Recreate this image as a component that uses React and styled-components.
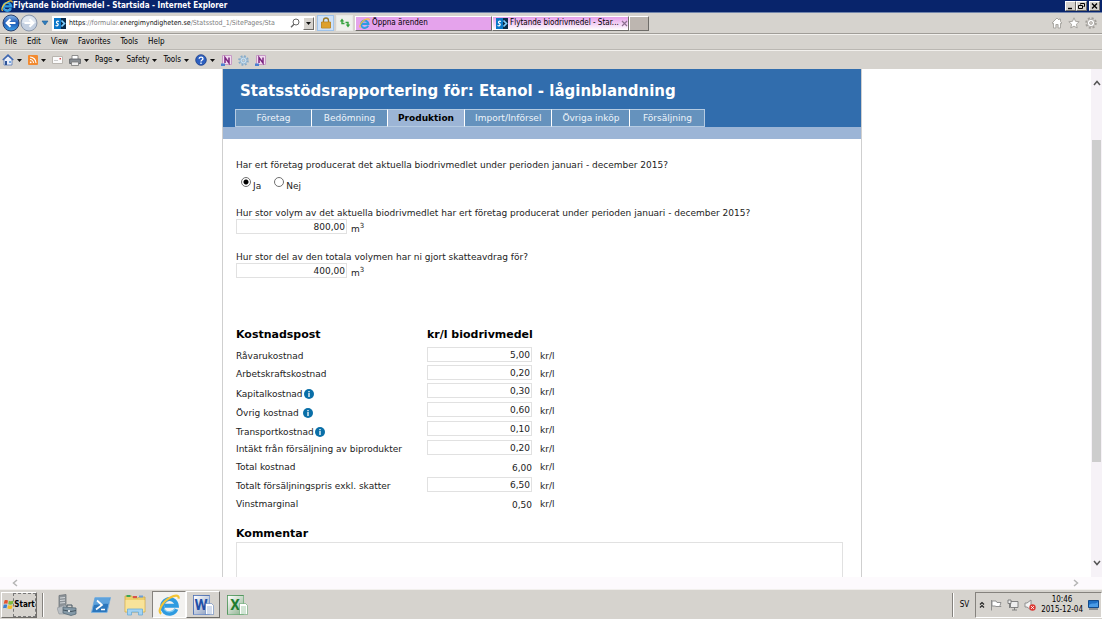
import { useState } from "react";
import styled, { createGlobalStyle, css } from "styled-components";

const App = () => {
  const [tab, setTab] = useState("Produktion");
  const [produced, setProduced] = useState("ja");

  return (
    <Desktop>
      <GlobalStyle />

      {/* Browser window */}
      <TitleBar>
        <IeIcon size={12} />
        <WindowTitle>Flytande biodrivmedel - Startsida - Internet Explorer</WindowTitle>
        <WindowButtons>
          <WindowButton aria-label="Minimize">
            <svg width="9" height="8" viewBox="0 0 9 8">
              <path d="M2 6.5h4" stroke="#000" strokeWidth="1.4" />
            </svg>
          </WindowButton>
          <WindowButton aria-label="Restore">
            <svg width="9" height="8" viewBox="0 0 9 8" fill="none" stroke="#000">
              <path d="M3.500 2.500v-1h4v3h-1" />
              <path d="M1.500 3.500h4v3h-4z" />
            </svg>
          </WindowButton>
          <WindowButton aria-label="Close" $apart>
            <svg width="9" height="8" viewBox="0 0 9 8" stroke="#000" strokeWidth="1.4">
              <path d="M2 1.500l5 5M7 1.500l-5 5" />
            </svg>
          </WindowButton>
        </WindowButtons>
      </TitleBar>

      <AddressRow>
        <IconButton aria-label="Back">
          <BackIcon />
        </IconButton>
        <IconButton aria-label="Forward">
          <ForwardIcon />
        </IconButton>
        <HistoryButton aria-label="Recent pages">
          <svg width="8" height="6" viewBox="0 0 8 6">
            <path d="M1 1h6L4 5z" fill="#2f7fc0" stroke="#1b5a94" strokeWidth=".6" />
          </svg>
        </HistoryButton>
        <AddressBar>
          <SharePointIcon />
          <AddressText role="textbox" aria-label="Address" contentEditable suppressContentEditableWarning>
            <b>https</b>://formular.<b>energimyndigheten.se</b>/Statsstod_1/SitePages/Sta
          </AddressText>
          <IconButton aria-label="Search">
            <svg width="10" height="10" viewBox="0 0 10 10" fill="none" stroke="#666">
              <circle cx="6" cy="4" r="3" />
              <path d="M4 6.300L1 9.300" strokeWidth="1.400" />
            </svg>
          </IconButton>
          <DropButton aria-label="Show address list">
            <Caret />
          </DropButton>
        </AddressBar>
        <SquareButton aria-label="Security report" $active>
          <svg width="10" height="12" viewBox="0 0 10 12">
            <path d="M2.500 5V3.500a2.500 2.500 0 0 1 5 0V5" fill="none" stroke="#9a7a2a" strokeWidth="1.300" />
            <path d="M.5 5h9v6h-9z" fill="#e8ab33" stroke="#b57d17" strokeWidth=".8" />
            <path d="M1 7h8M1 9h8" stroke="#c98d1f" strokeWidth=".7" />
          </svg>
        </SquareButton>
        <SquareButton aria-label="Refresh">
          <svg width="12" height="10" viewBox="0 0 12 10" fill="#31a03a" stroke="#31a03a">
            <path d="M3 .5L.8 3.500h4.400z" stroke="none" />
            <path d="M3 3v2.500h2.500" fill="none" strokeWidth="1.400" />
            <path d="M9 9.500L6.800 6.500h4.400z" stroke="none" />
            <path d="M9 7V4.500H6.500" fill="none" strokeWidth="1.400" />
          </svg>
        </SquareButton>
        <BrowserTabs>
          <BrowserTab>
            <IeIcon size={11} />
            <span>Öppna ärenden</span>
          </BrowserTab>
          <BrowserTab $current>
            <SharePointIcon />
            <span>Flytande biodrivmedel - Star...</span>
            <svg width="7" height="7" viewBox="0 0 7 7" stroke="#8d6f90" strokeWidth="1.200">
              <path d="M1 1l5 5M6 1L1 6" />
            </svg>
          </BrowserTab>
          <NewTabButton aria-label="New tab" />
        </BrowserTabs>
        <CornerButtons>
          <IconButton aria-label="Home">
            <svg width="12" height="12" viewBox="0 0 12 12" fill="#fff" stroke="#a3a09b" strokeWidth=".9">
              <path d="M6 1L1 6l.8.8.7-.6V11h2.400V7.500h2.200V11h2.400V6.200l.7.6L11 6 9.500 4.500V2H8v1z" />
            </svg>
          </IconButton>
          <IconButton aria-label="Favorites">
            <svg width="12" height="12" viewBox="0 0 12 12" fill="#fff" stroke="#a3a09b" strokeWidth=".9">
              <path d="M6 .8l1.500 3.500 3.700.4-2.800 2.500.8 3.800L6 9.100 2.800 11l.8-3.800L.8 4.700l3.700-.4z" />
            </svg>
          </IconButton>
          <IconButton aria-label="Settings">
            <GearIcon size={12} fill="#fff" stroke="#a3a09b" />
          </IconButton>
        </CornerButtons>
      </AddressRow>

      <MenuBar>
        {menus.map((menu) => (
          <MenuButton key={menu}>{menu}</MenuButton>
        ))}
      </MenuBar>

      <CommandBar>
        <CommandButton aria-label="Home page">
          <svg width="12" height="12" viewBox="0 0 12 12">
            <path d="M2 5.500V11h8V5.500L6 2z" fill="#e8eefa" stroke="#5879b5" strokeWidth=".8" />
            <path d="M.7 6L6 1l5.300 5" fill="none" stroke="#3d66b0" strokeWidth="1.300" />
            <path d="M3 7h2v4H3z" fill="#2f5597" />
            <path d="M7 7h2v2H7z" fill="#75a7e0" />
          </svg>
          <Caret />
        </CommandButton>
        <CommandButton aria-label="Feeds">
          <svg width="10" height="10" viewBox="0 0 10 10" fill="none" stroke="#fff" strokeWidth="1.100">
            <rect width="10" height="10" rx="1" fill="#f28a30" stroke="none" />
            <path d="M2 2a6 6 0 0 1 6 6M2 4.500A3.500 3.500 0 0 1 5.500 8" />
            <circle cx="2.700" cy="7.300" r=".9" fill="#fff" stroke="none" />
          </svg>
          <Caret />
        </CommandButton>
        <CommandButton aria-label="Read mail">
          <svg width="11" height="8" viewBox="0 0 11 8">
            <path d="M.5.500h10v7H.5z" fill="#fafafa" stroke="#b9b5af" />
            <path d="M7.500 2h1.500v1.500H7.500z" fill="#d44" />
            <path d="M2 4.500h4" stroke="#ccc" />
          </svg>
        </CommandButton>
        <CommandButton aria-label="Print">
          <svg width="12" height="11" viewBox="0 0 12 11">
            <path d="M3 .5h6v4H3z" fill="#fff" stroke="#777" strokeWidth=".8" />
            <path d="M.6 4h10.800v4.500H.6z" fill="#8a8f94" stroke="#55595d" strokeWidth=".8" />
            <path d="M2.500 7h7v3.500h-7z" fill="#eee" stroke="#777" strokeWidth=".8" />
          </svg>
          <Caret />
        </CommandButton>
        {commands.map((command) => (
          <CommandButton key={command}>
            {command}
            <Caret />
          </CommandButton>
        ))}
        <CommandButton aria-label="Help">
          <svg width="12" height="12" viewBox="0 0 12 12">
            <circle cx="6" cy="6" r="5.300" fill="#2c5fc0" stroke="#1d3f85" strokeWidth=".8" />
            <path d="M4.200 4.700C4.200 2.500 8 2.600 8 4.700 8 6 6 6 6 7.400M6 8.500V10" fill="none" stroke="#fff" strokeWidth="1.300" />
          </svg>
          <Caret />
        </CommandButton>
        <AddOns>
          <CommandButton aria-label="Send to OneNote">
            <OneNoteIcon />
          </CommandButton>
          <CommandButton aria-label="Add-on settings">
            <GearIcon size={11} fill="#c9dff0" stroke="#86abc9" />
          </CommandButton>
          <CommandButton aria-label="OneNote linked notes">
            <OneNoteIcon />
          </CommandButton>
        </AddOns>
      </CommandBar>

      {/* Page */}
      <Viewport>
        <PageArea>
          <Sheet>
            <SheetHeader>
              <SheetTitle>Statsstödsrapportering för: Etanol - låginblandning</SheetTitle>
              <FormTabs>
                {formTabs.map((name) => (
                  <FormTab key={name} $current={name === tab} onClick={() => setTab(name)}>
                    {name}
                  </FormTab>
                ))}
              </FormTabs>
            </SheetHeader>
            <Form>
              <RadioGroup>
                <legend>
                  Har ert företag producerat det aktuella biodrivmedlet under perioden januari - december 2015?
                </legend>
                {answers.map(({ value, label }) => (
                  <RadioLabel key={value}>
                    <Radio
                      name="produced"
                      value={value}
                      checked={produced === value}
                      onChange={() => setProduced(value)}
                    />
                    <span>{label}</span>
                  </RadioLabel>
                ))}
              </RadioGroup>

              {volumes.map(({ id, question, value }) => (
                <Question key={id}>
                  <label htmlFor={id}>{question}</label>
                  <VolumeRow>
                    <NumberInput id={id} defaultValue={value} />
                    <Unit>
                      m<sup>3</sup>
                    </Unit>
                  </VolumeRow>
                </Question>
              ))}

              <CostTable>
                <colgroup>
                  <LabelCol />
                  <ValueCol />
                  <col />
                </colgroup>
                <thead>
                  <tr>
                    <th scope="col">Kostnadspost</th>
                    <th scope="col" colSpan={2}>kr/l biodrivmedel</th>
                  </tr>
                </thead>
                <tbody>
                  {costs.map(({ id, label, value, info, spaced, computed }) => (
                    <CostRow key={id} $tall={info || computed}>
                      <th scope="row">
                        <CostLabel $info={info} $spaced={spaced}>
                          <label htmlFor={id}>{label}</label>
                          {info && <InfoIcon />}
                        </CostLabel>
                      </th>
                      <td>
                        {computed ? (
                          <Computed id={id}>{value}</Computed>
                        ) : (
                          <NumberInput id={id} defaultValue={value} />
                        )}
                      </td>
                      <td>kr/l</td>
                    </CostRow>
                  ))}
                </tbody>
              </CostTable>

              <CommentLabel htmlFor="comment">Kommentar</CommentLabel>
              <Comment id="comment" />
            </Form>
          </Sheet>
        </PageArea>
        <ScrollTrack>
          <Chevron direction="up" />
          <ScrollThumb />
          <Chevron direction="down" />
        </ScrollTrack>
      </Viewport>
      <BottomScroll>
        <Chevron direction="left" />
        <Chevron direction="right" />
      </BottomScroll>

      {/* Taskbar */}
      <Taskbar>
        <StartButton>
          <WindowsIcon />
          <span>Start</span>
        </StartButton>
        <Divider />
        <TaskButton aria-label="Server Manager">
          <ServerIcon />
        </TaskButton>
        <TaskButton aria-label="PowerShell">
          <PowerShellIcon />
        </TaskButton>
        <TaskButton aria-label="File Explorer">
          <FolderIcon />
        </TaskButton>
        <TaskButton aria-label="Internet Explorer" $state="pressed">
          <IeIcon size={22} />
        </TaskButton>
        <TaskButton aria-label="Word" $state="raised">
          <OfficeIcon letter="W" color="#1f4fa8" />
        </TaskButton>
        <TaskButton aria-label="Excel">
          <OfficeIcon letter="X" color="#1f7d30" />
        </TaskButton>
        <TrayArea>
          <Divider />
          <Language>SV</Language>
          <Tray>
            <TrayIcons />
            <Clock>
              <span>10:46</span>
              <span>2015-12-04</span>
            </Clock>
            <svg width="11" height="10" viewBox="0 0 11 10">
              <path d="M.5.500h10v7H.5z" fill="#1f6fc4" stroke="#134a8a" />
              <path d="M1 5c3-3 6 0 9-3v5H1z" fill="#4a9be6" />
              <path d="M1 9h9" stroke="#46505a" />
            </svg>
          </Tray>
        </TrayArea>
      </Taskbar>
    </Desktop>
  );
};

const menus = ["File", "Edit", "View", "Favorites", "Tools", "Help"];
const commands = ["Page", "Safety", "Tools"];
const formTabs = ["Företag", "Bedömning", "Produktion", "Import/Införsel", "Övriga inköp", "Försäljning"];
const answers = [
  { value: "ja", label: "Ja" },
  { value: "nej", label: "Nej" },
];

const volumes = [
  {
    id: "volume",
    question:
      "Hur stor volym av det aktuella biodrivmedlet har ert företag producerat under perioden januari - december 2015?",
    value: "800,00",
  },
  {
    id: "deducted",
    question: "Hur stor del av den totala volymen har ni gjort skatteavdrag för?",
    value: "400,00",
  },
];

const costs = [
  { id: "material", label: "Råvarukostnad", value: "5,00" },
  { id: "labour", label: "Arbetskraftskostnad", value: "0,20" },
  { id: "capital", label: "Kapitalkostnad", value: "0,30", info: true },
  { id: "other", label: "Övrig kostnad", value: "0,60", info: true, spaced: true },
  { id: "transport", label: "Transportkostnad", value: "0,10", info: true },
  { id: "byproducts", label: "Intäkt från försäljning av biprodukter", value: "0,20" },
  { id: "total", label: "Total kostnad", value: "6,00", computed: true },
  { id: "price", label: "Totalt försäljningspris exkl. skatter", value: "6,50" },
  { id: "margin", label: "Vinstmarginal", value: "0,50", computed: true },
];

// Icons
const Caret = () => (
  <svg width="5" height="3" viewBox="0 0 5 3">
    <path d="M0 0h5L2.500 3z" fill="#111" />
  </svg>
);

const IeIcon = ({ size }) => (
  <svg width={size} height={size} viewBox="0 0 24 24" fill="none">
    <path d="M20 16.500A8 8 0 1 1 20.500 12.800H7" stroke="#2f9be0" strokeWidth="4.400" />
    <path d="M18.500 15.800a7 7 0 0 1-12 .5" stroke="#7cc8f2" strokeWidth="1.200" />
    <path d="M3.500 21.500C-1 19 5 8 13 4c5-2.600 10-3.500 9.500 1" stroke="#f3c436" strokeWidth="2.400" />
  </svg>
);

const BackIcon = () => (
  <svg width="18" height="18" viewBox="0 0 18 18">
    <defs>
      <linearGradient id="back" x1="0" y1="0" x2="0" y2="1">
        <stop offset="0" stopColor="#8ab8ea" />
        <stop offset=".5" stopColor="#1b58b4" />
        <stop offset="1" stopColor="#3fa2ea" />
      </linearGradient>
    </defs>
    <circle cx="9" cy="9" r="8" fill="url(#back)" stroke="#27406e" />
    <path d="M13.500 9H5M8.500 5.200L4.700 9l3.800 3.800" fill="none" stroke="#fff" strokeWidth="2.200" />
  </svg>
);

const ForwardIcon = () => (
  <svg width="18" height="18" viewBox="0 0 18 18">
    <circle cx="9" cy="9" r="8" fill="#c3cfe0" stroke="#8a97ab" />
    <path d="M2 9a7 7 0 0 1 14 0z" fill="#dfe6f0" />
    <path d="M4.500 9H13M9.500 5.200L13.300 9l-3.800 3.800" fill="none" stroke="#fff" strokeWidth="2.200" />
  </svg>
);

const SharePointIcon = () => (
  <svg width="12" height="11" viewBox="0 0 12 11">
    <path d="M0 0h12v11H0z" fill="#0b2b4a" />
    <path d="M0 0h7v11H0z" fill="#0b76c8" />
    <path d="M5 3.500C3 2.500 1.500 4.500 3.300 5.300S4 8.500 1.500 7.500" fill="none" stroke="#fff" strokeWidth="1.200" />
    <path d="M7.500 2.500l3 3-3 3" fill="none" stroke="#7fd0ff" strokeWidth="1.700" />
  </svg>
);

const GearIcon = ({ size, fill, stroke }) => (
  <svg width={size} height={size} viewBox="0 0 12 12" fill="none">
    <circle cx="6" cy="6" r="4.700" stroke={stroke} strokeWidth="2.200" strokeDasharray="2 1.690" />
    <circle cx="6" cy="6" r="3.700" fill={fill} stroke={stroke} strokeWidth=".8" />
    <circle cx="6" cy="6" r="1.400" fill="#d6d3ce" stroke={stroke} strokeWidth=".8" />
  </svg>
);

const OneNoteIcon = () => (
  <svg width="11" height="11" viewBox="0 0 11 11">
    <path d="M1.500.500h9v9h-9z" fill="#f2dcf0" stroke="#c79ac5" />
    <path d="M4 8V2.500L8 8V2.500" fill="none" stroke="#7b2580" strokeWidth="1.500" />
    <path d="M0 8.500h4V11H0z" fill="#4a7fd0" />
  </svg>
);

const InfoIcon = () => (
  <svg width="10" height="10" viewBox="0 0 10 10">
    <circle cx="5" cy="5" r="5" fill="#0a6fa8" />
    <path d="M5 4v4M5 2v1.200" stroke="#fff" strokeWidth="1.300" />
  </svg>
);

const turns = { up: 0, right: 90, down: 180, left: 270 };

const Chevron = ({ direction }) => (
  <svg width="8" height="8" viewBox="0 0 8 8" fill="none">
    <path
      d="M1 6l3-3.500L7 6"
      stroke={direction === "left" || direction === "right" ? "#b5b5b5" : "#555"}
      strokeWidth="1.500"
      transform={`rotate(${turns[direction]} 4 4)`}
    />
  </svg>
);

const WindowsIcon = () => (
  <svg width="11" height="11" viewBox="0 0 11 11">
    <path d="M1.500 1.500C3 .7 4 1 5 1.500L4.300 5c-1-.5-2-.6-3.500 0z" fill="#e5532d" />
    <path d="M5.800 1.800c1.500.7 2.800.6 4.700-.2L9.800 5c-1.600.8-3 .9-4.600.3z" fill="#7dba3b" />
    <path d="M.7 5.800c1.400-.6 2.500-.5 3.500 0L3.500 9.300c-1-.5-2-.6-3.500 0z" fill="#3d7fd0" />
    <path d="M5 6.200c1.500.6 2.900.5 4.600-.2L9 9.400c-1.700.7-3.100.8-4.700.2z" fill="#f4bd28" />
  </svg>
);

const ServerIcon = () => (
  <svg width="20" height="22" viewBox="0 0 20 22">
    <path d="M2 1.500L9 .5v15l-7 1z" fill="#8d9398" stroke="#70767b" strokeWidth=".8" />
    <path d="M3 4l5-.5M3 6.500l5-.5M3 9l5-.5" stroke="#d4d8db" />
    <path d="M0 14l8-3 4 4v5H2z" fill="#b8bec3" stroke="#8d9398" strokeWidth=".6" />
    <path d="M6 13l13 1v6l-5 1.500L6 19z" fill="#8499a7" stroke="#566875" strokeWidth=".8" />
    <path d="M10 13v-2h5v2.500M6 16l8 1.500 5-1" fill="none" stroke="#455560" />
    <path d="M11 16h2v2h-2z" fill="#dfe6ea" />
  </svg>
);

const PowerShellIcon = () => (
  <svg width="20" height="16" viewBox="0 0 20 16">
    <path d="M4 .5h15.500L16 15.500H.5z" fill="#2c77bd" stroke="#7cb1de" />
    <path d="M4 1h15l-1.500 6C12 6 7 8 2.500 8z" fill="#5ea2dc" />
    <path d="M6 3.500l5 4.500-6 4.500M10 12.500h4" fill="none" stroke="#fff" strokeWidth="1.700" />
  </svg>
);

const FolderIcon = () => (
  <svg width="22" height="22" viewBox="0 0 22 22">
    <path d="M1 2h7l1 2h5l1-1h6v15H1z" fill="#eecf6c" stroke="#d0a94a" strokeWidth=".8" />
    <path d="M2.500 1h4v2h-4z" fill="#3aa657" />
    <path d="M9 2h4v2H9z" fill="#d9534a" />
    <path d="M15 1.500h4v2h-4z" fill="#6d9fd6" />
    <path d="M1.500 6h19v11.500h-19z" fill="#f8e39a" />
    <path d="M3.500 21v-6h15v6h-4v-3h-7v3z" fill="#a3d3f3" stroke="#6aacd8" strokeWidth=".8" strokeLinejoin="round" />
  </svg>
);

const OfficeIcon = ({ letter, color }) => (
  <OfficeBadge $color={color}>
    <span>{letter}</span>
    <svg width="9" height="12" viewBox="0 0 9 12">
      <path d="M.5.500h6l2 2v9h-8z" fill="#fff" stroke={color} strokeOpacity=".4" />
      <path d="M2 4h5M2 6h5M2 8h5M2 10h5" stroke={color} strokeOpacity=".5" strokeWidth=".8" />
    </svg>
  </OfficeBadge>
);

const TrayIcons = () => (
  <>
    <svg width="6" height="8" viewBox="0 0 6 8" fill="none" stroke="#222" strokeWidth="1.200">
      <path d="M1 3.500l2-2 2 2M1 6.500l2-2 2 2" />
    </svg>
    <svg width="12" height="12" viewBox="0 0 12 12" fill="#fff" stroke="#888" strokeWidth=".9">
      <path d="M1.500 1v10.500M2 2h4l1 1.500h4l-1 3 1 1H6L5 7H2z" />
    </svg>
    <svg width="12" height="12" viewBox="0 0 12 12" fill="#eee" stroke="#777" strokeWidth=".9">
      <path d="M3.500 2.500H11v6H3.500zM5 11h5M7.500 8.500V11" />
      <path d="M1 1h3v3.500H1zM2.500 4.500V9" />
    </svg>
    <svg width="12" height="12" viewBox="0 0 12 12">
      <path d="M1 4h2l4-3v10L3 8H1z" fill="#f4f4f4" stroke="#888" strokeWidth=".9" />
      <circle cx="8.500" cy="8.500" r="3.200" fill="#dc3a34" />
      <path d="M7.200 7.200l2.600 2.600M9.800 7.200L7.200 9.800" stroke="#fff" />
    </svg>
  </>
);

// Styles
const GlobalStyle = createGlobalStyle`
  * {
    box-sizing: border-box;
  }

  body {
    margin: 0;
    overflow: hidden;
  }

  button {
    padding: 0;
    border: 0;
    background: none;
    color: inherit;
    font: inherit;
    white-space: nowrap;
  }

  svg {
    display: block;
    flex: none;
  }
`;

const raised = css`
  border: 1px solid;
  border-color: #fff #6f6d69 #6f6d69 #fff;
`;

const sunken = css`
  border: 1px solid;
  border-color: #85827d #fff #fff #85827d;
`;

const Desktop = styled.div`
  display: flex;
  flex-direction: column;
  height: 100vh;
  background: #d6d3ce;
  color: #000;
  font-family: "DejaVu Sans Condensed", Tahoma, sans-serif;
  font-size: 8px;
  line-height: 10px;
`;

const TitleBar = styled.header`
  display: flex;
  align-items: center;
  flex: none;
  height: 13px;
  padding: 0 2px 0 1px;
  border-bottom: 1px solid #7184ab;
  background: #08246b;
  color: #fff;
`;

const WindowTitle = styled.h1`
  flex: 1;
  margin: 0;
  font-size: 8px;
  font-weight: bold;
  line-height: 12px;
`;

const WindowButtons = styled.div`
  display: flex;
`;

const WindowButton = styled.button`
  ${raised}
  display: flex;
  align-items: center;
  justify-content: center;
  width: 11px;
  height: 10px;
  margin-left: ${({ $apart }) => ($apart ? "2px" : 0)};
  background: #d6d3ce;
`;

const AddressRow = styled.div`
  display: flex;
  align-items: center;
  flex: none;
  height: 21px;
  padding: 0 5px 0 2px;
  border-bottom: 1px solid #a09d98;
`;

const IconButton = styled.button`
  display: flex;
  align-items: center;
  justify-content: center;
`;

const HistoryButton = styled(IconButton)`
  width: 14px;
`;

const AddressBar = styled.div`
  display: flex;
  align-items: center;
  gap: 3px;
  width: 263px;
  height: 15px;
  padding: 0 1px 0 2px;
  background: #fff;
`;

const AddressText = styled.div`
  flex: 1;
  color: #808080;
  font-size: 7px;
  white-space: nowrap;

  b {
    color: #111;
    font-weight: normal;
  }
`;

const DropButton = styled.button`
  ${raised}
  display: flex;
  align-items: center;
  justify-content: center;
  width: 11px;
  height: 13px;
  background: #d6d3ce;
`;

const SquareButton = styled(IconButton)`
  width: 17px;
  height: 16px;
  margin-left: 2px;
  border: 1px solid ${({ $active }) => ($active ? "#9fc3ea" : "#e9e9e6")};
  background: ${({ $active }) => ($active ? "#cfe2f8" : "#eef0ec")};
`;

const BrowserTabs = styled.div`
  display: flex;
  margin-left: 2px;
`;

const BrowserTab = styled.button`
  ${raised}
  display: flex;
  align-items: center;
  gap: 2px;
  width: 137px;
  height: 15px;
  padding: 0 3px;
  background: ${({ $current }) => ($current ? "linear-gradient(#e6a0ea, #fff)" : "#e5a3ec")};
  text-align: left;

  span {
    flex: 1;
  }
`;

const NewTabButton = styled.button`
  ${raised}
  width: 20px;
  height: 15px;
  background: #bdb6b0;
`;

const CornerButtons = styled.div`
  display: flex;
  gap: 5px;
  margin-left: auto;
`;

const MenuBar = styled.nav`
  display: flex;
  align-items: center;
  flex: none;
  gap: 10px;
  height: 16px;
  padding: 0 5px;
  border-top: 1px solid #f2f0ed;
  border-bottom: 1px solid #bab7b2;
`;

const MenuButton = styled.button``;

const CommandBar = styled.div`
  display: flex;
  align-items: center;
  flex: none;
  gap: 6px;
  height: 19px;
  padding: 0 2px;
  border-top: 1px solid #f2f0ed;
`;

const CommandButton = styled.button`
  display: flex;
  align-items: center;
  gap: 3px;
`;

const AddOns = styled.div`
  display: flex;
  gap: 6px;
`;

const Viewport = styled.div`
  display: flex;
  flex: 1;
  min-height: 0;
  background: #fff;
`;

const PageArea = styled.main`
  flex: 1;
  overflow: hidden;
  padding-right: 7px;
`;

const Sheet = styled.article`
  max-width: 640px;
  min-height: 100%;
  margin: 0 auto;
  border: solid #cfcfcf;
  border-width: 0 1px;
  color: #222;
  font-family: "DejaVu Sans", Verdana, sans-serif;
  font-size: 9px;
  line-height: 12px;
`;

const SheetHeader = styled.header`
  padding: 13px 12px 0;
  border-bottom: 12px solid #9cb5d6;
  background: #316dad;
`;

const SheetTitle = styled.h2`
  margin: 0 0 8px 5px;
  color: #fff;
  font-size: 15px;
  line-height: 19px;
`;

const FormTabs = styled.div`
  display: flex;
`;

const FormTab = styled.button`
  min-width: 76px;
  height: 18px;
  padding: 0 10px;
  border: 1px solid #b5cbe2;
  border-left-color: #fff;
  border-right-width: 0;
  background: ${({ $current }) => ($current ? "#9cb5d6" : "#6592bd")};
  color: ${({ $current }) => ($current ? "#000" : "#eef4fa")};
  font-weight: ${({ $current }) => ($current ? "bold" : "normal")};

  &:first-child {
    border-left-color: #b5cbe2;
  }

  &:last-child {
    border-right-width: 1px;
  }
`;

const Form = styled.form`
  display: flex;
  flex-direction: column;
  padding: 20px 18px 0 13px;
`;

const RadioGroup = styled.fieldset`
  display: flex;
  gap: 13px;
  margin: 0 0 15px;
  padding: 5px 0 0 5px;
  border: 0;

  legend {
    margin-left: -5px;
    padding: 0;
  }
`;

const RadioLabel = styled.label`
  display: flex;
  gap: 2px;

  span {
    padding-top: 4px;
  }
`;

const Radio = styled.input.attrs({ type: "radio" })`
  appearance: none;
  width: 10px;
  height: 10px;
  margin: 1px 0 0;
  border: 1px solid #707070;
  border-radius: 50%;
  background: #fff;

  &:checked {
    background: radial-gradient(circle, #000 2px, #fff 3px);
  }
`;

const Question = styled.div`
  display: flex;
  flex-direction: column;
  margin-bottom: 16px;
`;

const VolumeRow = styled.div`
  display: flex;
  gap: 4px;

  input {
    width: 111px;
  }
`;

const NumberInput = styled.input`
  display: block;
  width: 105px;
  height: 15px;
  padding: 0 1px;
  border: 1px solid #e1e1e1;
  background: #fff;
  color: #222;
  font: inherit;
  text-align: right;
`;

const Unit = styled.span`
  padding-top: 4px;

  sup {
    font-size: 7px;
    line-height: 1px;
  }
`;

const CostTable = styled.table`
  align-self: flex-start;
  margin-top: 33px;
  border-collapse: collapse;

  th,
  td {
    padding: 0;
    font-weight: normal;
    text-align: left;
    vertical-align: top;
  }

  thead th {
    height: 19px;
    color: #000;
    font-size: 11px;
    font-weight: bold;
    line-height: 14px;
  }

  td:last-child {
    padding: 3px 0 0 8px;
  }
`;

const LabelCol = styled.col`
  width: 191px;
`;

const ValueCol = styled.col`
  width: 105px;
`;

const CostRow = styled.tr`
  height: ${({ $tall }) => ($tall ? "19px" : "18px")};
`;

const CostLabel = styled.div`
  display: flex;
  align-items: center;
  gap: ${({ $spaced }) => ($spaced ? "4px" : "1px")};
  padding-top: ${({ $info }) => ($info ? "5px" : "3px")};
`;

const Computed = styled.output`
  display: block;
  padding-top: 4px;
  text-align: right;
`;

const CommentLabel = styled.label`
  margin: 13px 0 1px;
  color: #000;
  font-size: 11px;
  font-weight: bold;
  line-height: 14px;
`;

const Comment = styled.textarea`
  height: 80px;
  border: 1px solid #e1e1e1;
  font: inherit;
  resize: none;
`;

const ScrollTrack = styled.div`
  display: flex;
  flex-direction: column;
  align-items: center;
  width: 11px;
  padding: 10px 0;
  background: #f6f2f7;
`;

const ScrollThumb = styled.div`
  align-self: stretch;
  height: 66%;
  margin: 53px 1px auto;
  background: #cdcdcd;
`;

const BottomScroll = styled.div`
  display: flex;
  align-items: center;
  justify-content: space-between;
  flex: none;
  height: 12px;
  padding: 0 22px 0 11px;
  background: #fdfafd;
`;

const Taskbar = styled.footer`
  display: flex;
  align-items: center;
  flex: none;
  height: 30px;
  border-top: 1px solid #f2f0ed;
  background: #d6d3ce;
`;

const StartButton = styled.button`
  ${raised}
  display: flex;
  align-items: center;
  width: 36px;
  height: 26px;
  margin: 0 5px 0 1px;
  padding: 0 1px;
  font-weight: bold;

  span {
    flex: 1;
    padding: 6px 0;
    outline: 1px dashed #777;
  }
`;

const Divider = styled.div`
  width: 2px;
  height: 24px;
  border-left: 1px solid #85827d;
  border-right: 1px solid #fff;
`;

const TaskButton = styled.button`
  display: flex;
  align-items: center;
  justify-content: center;
  width: 34px;
  height: 27px;
  border: 1px solid transparent;

  ${({ $state }) => $state === "raised" && raised}
  ${({ $state }) =>
    $state === "pressed" &&
    css`
      ${sunken}
      background: #f3f2f0;
    `}

  ${Divider} + & {
    margin-left: 6px;
  }
`;

const OfficeBadge = styled.span`
  display: flex;
  align-items: center;

  span {
    width: 17px;
    border: 1px solid ${({ $color }) => $color}88;
    background: linear-gradient(135deg, #fff, ${({ $color }) => $color}66);
    color: ${({ $color }) => $color};
    font-family: Roboto, sans-serif;
    font-size: 15px;
    font-weight: bold;
    line-height: 18px;
    text-align: center;
  }

  svg {
    margin: 8px 0 0 -5px;
  }
`;

const TrayArea = styled.div`
  display: flex;
  align-items: center;
  gap: 6px;
  margin-left: auto;
`;

const Language = styled.span``;

const Tray = styled.div`
  ${sunken}
  display: flex;
  align-items: center;
  gap: 5px;
  height: 26px;
  padding: 0 2px 0 3px;
`;

const Clock = styled.time`
  display: flex;
  flex-direction: column;
  align-items: center;
`;

export default App;
